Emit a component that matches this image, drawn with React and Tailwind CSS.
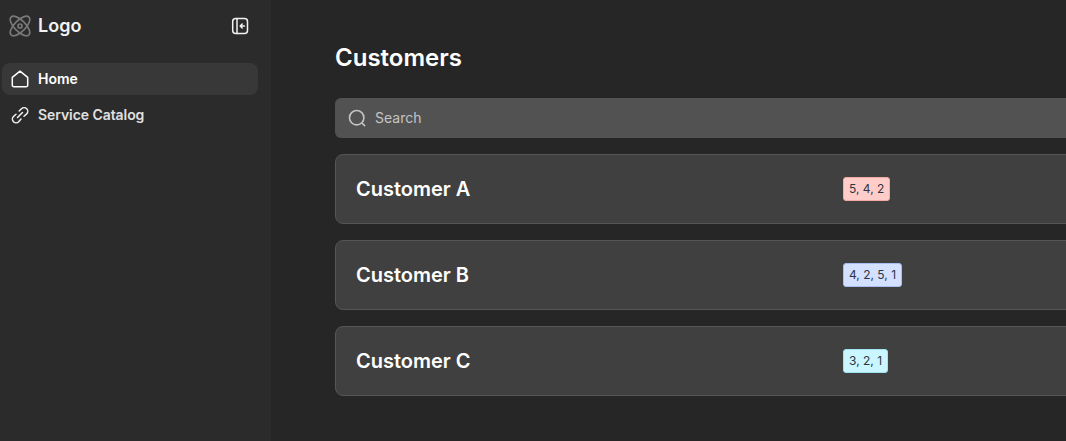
import React from "react";

const customers = [
  { name: "Customer A", tag: "5, 4, 2", tagClass: "bg-[#ffcdc9] border-[#f4a9a3]" },
  { name: "Customer B", tag: "4, 2, 5, 1", tagClass: "bg-[#d3e0ff] border-[#a9bdf0]" },
  { name: "Customer C", tag: "3, 2, 1", tagClass: "bg-[#c9f6ff] border-[#9fe3f2]" },
];

const LogoIcon = () => (
  <svg width="22" height="22" viewBox="0 0 22 22" fill="none" stroke="#787878" strokeWidth="1.7">
    <ellipse cx="11" cy="11" rx="12.6" ry="5.6" transform="rotate(45 11 11)" />
    <ellipse cx="11" cy="11" rx="12.6" ry="5.6" transform="rotate(-45 11 11)" />
    <circle cx="11" cy="11" r="2" />
  </svg>
);

const CollapseIcon = () => (
  <svg width="18" height="18" viewBox="0 0 18 18" fill="none" stroke="#f2f2f2" strokeWidth="1.5" strokeLinecap="round" strokeLinejoin="round">
    <rect x="1.7" y="1.5" width="14.8" height="15" rx="3" />
    <path d="M6 1.5v15" />
    <path d="M13.4 9H9.4M11.2 7l-2 2 2 2" />
  </svg>
);

const HomeIcon = () => (
  <svg width="18" height="18" viewBox="0 0 18 18" fill="none" stroke="#ffffff" strokeWidth="1.5" strokeLinejoin="round">
    <path d="M9 1.2 16.7 7.4V15.2a1.6 1.6 0 0 1-1.6 1.6H2.9a1.6 1.6 0 0 1-1.6-1.6V7.4Z" />
  </svg>
);

const LinkIcon = () => (
  <svg width="18" height="18" viewBox="0 0 18 18" fill="none" stroke="#f2f2f2" strokeWidth="1.5" strokeLinecap="round" strokeLinejoin="round">
    <path d="M8.2 5l2.3-2.3a3.7 3.7 0 0 1 5.2 0 3.7 3.7 0 0 1 0 5.2L13 10.2" />
    <path d="M5 8.2 2.5 10.5a3.7 3.7 0 0 0 0 5.2 3.7 3.7 0 0 0 5.2 0L10 13" />
    <path d="M6.5 11.5l5-5" />
  </svg>
);

const SearchIcon = () => (
  <svg width="18" height="18" viewBox="0 0 18 18" fill="none" stroke="#c4c4c4" strokeWidth="1.6" strokeLinecap="round">
    <circle cx="8.7" cy="8.7" r="7.2" />
    <path d="M14.2 14.2 16.6 16.6" />
  </svg>
);

export default function App() {
  return (
    <div className="flex h-[441px] w-[1066px] overflow-hidden bg-[#262626] font-['Inter',sans-serif]">
      <aside className="w-[271px] shrink-0 bg-[#2b2b2b] pl-[2px] pr-[13px]">
        <div className="flex h-[53px] items-center justify-between pb-[1px] pl-[7px] pr-[9px]">
          <div className="flex items-center gap-[7px]">
            <LogoIcon />
            <span className="pb-[1px] text-[18px] font-semibold text-[#f2f2f2]">Logo</span>
          </div>
          <CollapseIcon />
        </div>
        <nav className="mt-[10px] flex flex-col gap-[4px]">
          <div className="flex h-[32px] items-center gap-[9px] rounded-lg bg-[#383838] pb-[1px] pl-[9px] text-[14px] font-semibold text-white">
            <HomeIcon />
            Home
          </div>
          <div className="flex h-[32px] items-center gap-[9px] rounded-lg pb-[1px] pl-[9px] text-[14px] font-semibold tracking-[-0.07px] text-[#e0e0e0]">
            <LinkIcon />
            Service Catalog
          </div>
        </nav>
      </aside>

      <main className="w-[900px] shrink-0 pl-[64px] pt-[42px]">
        <h1 className="text-[24px] leading-[32px] font-semibold text-white">Customers</h1>
        <div className="mt-[24px] flex h-[40px] items-center gap-[9px] rounded-md bg-[#525252] pb-[1px] pl-[13px] text-[14px] text-[#c4c4c4]">
          <SearchIcon />
          Search
        </div>
        <div className="mt-[16px] flex flex-col gap-[16px]">
          {customers.map((c) => (
            <div
              key={c.name}
              className="flex h-[70px] items-center rounded-lg border border-[#565656] bg-[#404040] pl-[20px]"
            >
              <div className="w-[487px] text-[20px] font-semibold text-white">{c.name}</div>
              <span className={`rounded-[3px] border px-[5px] py-[3px] text-[12px] leading-[16px] text-[#2f3542] ${c.tagClass}`}>
                {c.tag}
              </span>
            </div>
          ))}
        </div>
      </main>
    </div>
  );
}
